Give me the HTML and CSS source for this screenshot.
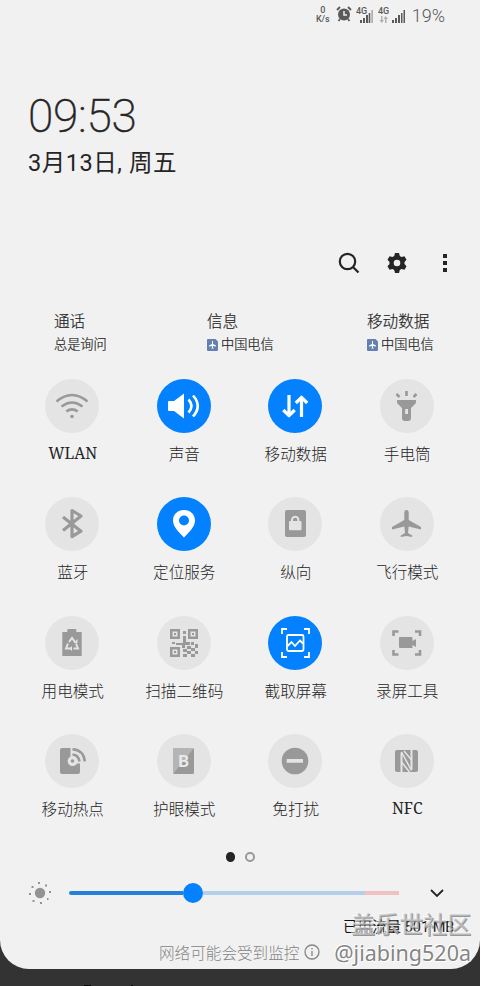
FILE: index.html
```html
<!DOCTYPE html>
<html lang="zh-CN">
<head>
<meta charset="utf-8">
<title>快捷设置</title>
<link rel="stylesheet" href="styles.css">
</head>
<body>
<main class="panel">
  <header class="status">
    <div class="speed"><span>0</span><span>K/s</span></div>
    <svg class="alarm" width="16" height="16" viewBox="0 0 16 16"><circle cx="8" cy="8.500" r="6"/><path class="line" d="M1 4l3-3M15 4l-3-3M4 13l-1.500 2M12 13l1.500 2"/><path class="hand" d="M8 5v4h3"/></svg>
    <svg class="signal" width="17" height="18" viewBox="0 0 17 18"><text x="0" y="8">4G</text><path d="M4 14h2v3H4zM7 12h2v5H7zM10 9h2v8h-2zM12.700 7h1.600v10h-1.600z"/><path class="faint" d="M15.300 4H17v13h-1.700z"/></svg>
    <svg class="signal second" width="28" height="18" viewBox="0 0 28 18"><text x="0" y="8">4G</text><path class="faint" d="M3 10h1.500v4H6L3.700 17 1.500 14H3zM7 17h1.500v-4H10L7.700 10 5.500 13H7z"/><path d="M14 14h2v3h-2zM17 12h2v5h-2zM20 9h2v8h-2zM23 7h1.500v10H23zM25.500 4h1.500v13h-1.500z"/></svg>
    <span class="percent">19%</span>
  </header>
  <section class="clock">
    <div class="time">09:53</div>
    <div class="date">3月13日, 周五</div>
  </section>
  <nav class="tools">
    <svg width="24" height="24" viewBox="0 0 24 24"><circle class="line" cx="10.500" cy="10.500" r="7.700"/><path class="line" d="M16 16l5.500 5.500"/></svg>
    <svg width="24" height="24" viewBox="0 0 24 24"><path fill-rule="evenodd" d="M10 2h4l.8 3 1.700 1 3-.8 2 3.500-2 2.200v2.200l2 2.200-2 3.500-3-.8-1.700 1-.8 3h-4l-.8-3-1.700-1-3 .8-2-3.500 2-2.200v-2.200l-2-2.200 2-3.500 3 .8 1.700-1zM12 8.700a3.300 3.300 0 1 0 0 6.600 3.300 3.300 0 0 0 0-6.600z"/></svg>
    <svg width="24" height="24" viewBox="0 0 24 24"><path d="M10 3h4v4h-4zM10 10h4v4h-4zM10 17h4v4h-4z"/></svg>
  </nav>
  <section class="sims">
    <div class="sim"><b>通话</b><span>总是询问</span></div>
    <div class="sim"><b>信息</b><span><svg class="chip" width="11" height="12" viewBox="0 0 11 12"><path class="card" d="M1 0h7.500L11 2.500V11q0 1-1 1H1q-1 0-1-1V1q0-1 1-1z"/><path class="jet" d="M5 2h1v3l3 1.500v1L6 7v1.500l1 1H4l1-1V7l-3 .5v-1L5 5z"/></svg>中国电信</span></div>
    <div class="sim"><b>移动数据</b><span><svg class="chip" width="11" height="12" viewBox="0 0 11 12"><path class="card" d="M1 0h7.500L11 2.500V11q0 1-1 1H1q-1 0-1-1V1q0-1 1-1z"/><path class="jet" d="M5 2h1v3l3 1.500v1L6 7v1.500l1 1H4l1-1V7l-3 .5v-1L5 5z"/></svg>中国电信</span></div>
  </section>
  <section class="tiles">
    <div class="tile"><svg class="icon" viewBox="0 0 54 54"><path class="line" d="M11.500 22.500Q27 9.500 42.500 22.500M16.500 27.500Q27 19.500 37.500 27.500M21.300 32.300Q27 28.500 32.700 32.300"/><circle cx="27" cy="37.500" r="1.800"/></svg><span>WLAN</span></div>
    <div class="tile on"><svg class="icon" viewBox="0 0 54 54"><path d="M12 22h5l10-7.500v25L17 32h-5q-1 0-1-1v-8q0-1 1-1z"/><path class="line" d="M31.500 20.500q6 6.500 0 13M36 16.500q9.500 10.500 0 21"/></svg><span>声音</span></div>
    <div class="tile on"><svg class="icon" viewBox="0 0 54 54"><path class="line bold" d="M21 16v20M15.300 31l5.700 5.700 5.700-5.700M33.500 38V18M27.800 24l5.700-5.700 5.700 5.700"/></svg><span>移动数据</span></div>
    <div class="tile"><svg class="icon" viewBox="0 0 54 54"><path class="line" d="M26.500 12v5M16.500 15l3 3M36.500 15l-3 3"/><path fill-rule="evenodd" d="M17 21h19v2q0 1.500-1.500 2.500L31 29v10q0 3-3 3h-3q-3 0-3-3V29l-3.500-3.500Q17 24.500 17 23zM25.200 30v5H28v-5z"/></svg><span>手电筒</span></div>
    <div class="tile"><svg class="icon" viewBox="0 0 54 54"><path class="line bold" d="M18 20l18 14.200-9 5.300V13.500l9 5.500L18 33.500"/></svg><span>蓝牙</span></div>
    <div class="tile on"><svg class="icon" viewBox="0 0 54 54"><path fill-rule="evenodd" d="M27 13c-6.500 0-11 4.500-11 10.500C16 30 22 35 27 40.500 32 35 38 30 38 23.500 38 17.500 33.500 13 27 13zM27 18.500a5 5 0 1 1 0 10 5 5 0 0 1 0-10z"/></svg><span>定位服务</span></div>
    <div class="tile"><svg class="icon" viewBox="0 0 54 54"><rect x="17" y="13" width="21" height="27" rx="2"/><rect class="bg" x="21" y="24" width="12.500" height="9.300" rx="1"/><path class="line cut" d="M24 25v-2a3.200 3.200 0 0 1 6.400 0v2"/></svg><span>纵向</span></div>
    <div class="tile"><svg class="icon" viewBox="0 0 54 54"><path d="M24.300 16q0-3 2.200-3t2.200 3v7L41 30v2.500L28.700 29.500l-.7 6.500 4.200 2.500V40l-5.700-1-5.700 1v-1.500L25 36l-.7-6.500L12 32.500V30l12.300-7z"/></svg><span>飞行模式</span></div>
    <div class="tile"><svg class="icon" viewBox="0 0 54 54"><path d="M17.300 16h5v-2q0-1 1-1h7q1 0 1 1v2h5.400v24H17.300z"/><path class="line cut" d="M24 26l3-4 3 4M31 27.500l2 5h-4.500M25.500 32.500H21l2-5"/><path class="bg" d="M27 35l-3-2.500 3-2.500zM28.500 27h4v-4z"/></svg><span>用电模式</span></div>
    <div class="tile"><svg class="icon" viewBox="0 0 54 54"><path fill-rule="evenodd" d="M13 13h10v10H13zM15.500 15.500v5h5v-5zM31 13h10v10H31zM33.500 15.500v5h5v-5zM13 31h10v10H13zM15.500 33.500v5h5v-5z"/><path d="M17 17h2v2h-2zM35 17h2v2h-2zM17 35h2v2h-2zM26 15h3v3h-3zM26 20h3v6h4v3h-5v3h-3v-3h-6v-2h7zM15 26h3v2h-3zM34 26h3v3h-3zM38 28h3v4h-3zM30 30h4v3h-4zM34 32h4v3h-4zM26 33h4v3h-4zM30 35h4v3h-4zM38 35h3v3h-3zM34 38h4v3h-4zM26 38h4v3h-4z"/></svg><span>扫描二维码</span></div>
    <div class="tile on"><svg class="icon" viewBox="0 0 54 54"><path class="line thin" d="M14 18v-5h5M36 13h5v5M41 36v5h-5M19 41h-5v-5"/><rect class="line thin" x="19" y="19" width="16.500" height="16" rx="1.500"/><path class="line thin" d="M19.500 30l4-4 3.500 4 5-5.500 3 3"/></svg><span>截取屏幕</span></div>
    <div class="tile"><svg class="icon" viewBox="0 0 54 54"><path class="line" d="M13.500 20v-4.500h5M35 15.500h5V20M40 34v4.500h-5M18.500 38.500h-5V34"/><path d="M20 21h11.500q1 0 1 1v3l3.500-2v8l-3.500-2v3h-12.500q-1 0-1-1v-9q0-1 1-1z"/></svg><span>录屏工具</span></div>
    <div class="tile"><svg class="icon" viewBox="0 0 54 54"><path d="M17 14h8.500v8.500a5 5 0 1 0 6.500 7H35V38q0 2-2 2H17q-2 0-2-2V16q0-2 2-2z"/><circle cx="27.500" cy="27" r="1.800"/><path class="line" d="M27.500 20.500q6 .5 7 7M27.500 15.300q11 .7 12.300 12"/></svg><span>移动热点</span></div>
    <div class="tile"><svg class="icon" viewBox="0 0 54 54"><rect x="16" y="14" width="21" height="26" rx="1.500"/><path class="light" d="M17.500 14H37L16 40V15.500q0-1.500 1.500-1.500z"/><text x="26.800" y="33">B</text></svg><span>护眼模式</span></div>
    <div class="tile"><svg class="icon" viewBox="0 0 54 54"><circle cx="27" cy="27" r="13.300"/><path class="bg" d="M18.700 25H35v3.700H18.700z"/></svg><span>免打扰</span></div>
    <div class="tile"><svg class="icon" viewBox="0 0 54 54"><rect x="15" y="16" width="23" height="22" rx="2"/><path class="line cut" d="M21.500 38V18.500M31.500 35.500V16"/><path class="line cut slim" d="M21.500 18l10 18.500M24 17l7.500 9M21.500 28l8 10"/></svg><span>NFC</span></div>
  </section>
  <div class="pages"><i class="current"></i><i></i></div>
  <div class="brightness">
    <svg class="sun" width="24" height="24" viewBox="0 0 24 24"><circle cx="12" cy="12" r="5.200"/><path d="M10 1h2v2h-2zM17 3.500h2v2h-2zM21 10h2v2h-2zM19 17h1.500v2H19zM12 21h2v2h-2zM4.500 19h2v2h-2zM1 12h2v2H1zM3.500 5h2v2h-2z"/></svg>
    <div class="track"><i class="fill"></i><i class="knob"></i><i class="rest"></i><i class="warn"></i></div>
    <svg class="chevron" width="16" height="10" viewBox="0 0 16 10"><path d="M2 2l6 6 6-6"/></svg>
  </div>
  <div class="usage">已用流量 501 MB</div>
  <footer class="notice">网络可能会受到监控<svg width="16" height="16" viewBox="0 0 16 16"><circle cx="8" cy="8" r="7"/><path d="M8 7v5M8 4v1.500"/></svg></footer>
</main>
<div class="behind"><i></i><i class="stem"></i></div>
<div class="mark"><span class="community">盖乐世社区</span><span class="user">@jiabing520a</span></div>
</body>
</html>
```
FILE: styles.css
```css
* { box-sizing: border-box; }
body {
  margin: 0;
  height: 986px;
  overflow: hidden;
  position: relative;
  background: #333;
  color: #252525;
  font-family: Roboto, "Noto Sans CJK SC", sans-serif;
}
svg { display: block; flex: none; }
.panel {
  height: 969px;
  background: #f1f1f1;
  border-radius: 0 0 29px 29px;
  display: flex;
  flex-direction: column;
  overflow: hidden;
}
.status {
  height: 30px;
  flex: none;
  padding-right: 35px;
  display: flex;
  justify-content: flex-end;
  align-items: center;
  color: #5a5a5a;
  fill: #5a5a5a;
}
.speed {
  display: flex;
  flex-direction: column;
  align-items: center;
  font-size: 9px;
  line-height: 9px;
  font-weight: 500;
  margin-right: 6px;
}
.alarm { margin-right: 4px; margin-top: -2px; }
.alarm .line { fill: none; stroke: #5a5a5a; stroke-width: 1.800; }
.alarm .hand { fill: none; stroke: #f1f1f1; stroke-width: 1.500; }
.signal { margin-right: 5px; }
.signal text { font: 500 9px Roboto, sans-serif; }
.second { margin-right: 6px; }
.faint { fill: #b0b0b0; }
.percent { font-size: 18px; font-weight: 300; }
.clock { height: 218px; flex: none; padding: 62px 0 0 28px; }
.time { font-size: 46px; line-height: 48px; height: 51px; font-weight: 200; letter-spacing: -.3px; font-family: Roboto, sans-serif; -webkit-text-stroke: .4px #252525; }
.date { font-size: 23.500px; line-height: 40px; letter-spacing: .55px; font-family: Roboto, "Noto Sans CJK SC", sans-serif; }
.tools {
  height: 30px;
  flex: none;
  padding-right: 23px;
  display: flex;
  justify-content: flex-end;
  align-items: center;
  gap: 24px;
  fill: #252525;
}
.tools .line { fill: none; stroke: #252525; stroke-width: 2.200; }
.sims {
  height: 101px;
  flex: none;
  padding: 34px 46px 0 54px;
  display: grid;
  grid-template-columns: 153px 160px auto;
}
.sim { white-space: nowrap; }
.sim b { display: block; height: 23px; font-size: 15.600px; line-height: 20px; font-weight: 300; -webkit-text-stroke: .2px #252525; }
.sim span { display: flex; align-items: center; font-size: 13.200px; line-height: 20px; font-weight: 300; -webkit-text-stroke: .2px #252525; }
.chip { margin-right: 3px; }
.card { fill: #6480ae; }
.jet { fill: #fff; }
.tiles {
  height: 469px;
  flex: none;
  margin: 0 17.500px 0 16.500px;
  display: grid;
  grid-template-columns: repeat(4, 1fr);
  grid-auto-rows: 118.400px;
}
.tile {
  display: flex;
  flex-direction: column;
  align-items: center;
  font-size: 15.600px;
  line-height: 24px;
  font-weight: 300;
  white-space: nowrap;
}
.tile span { margin-top: 8px; padding-left: 1px; font-family: "Noto Sans CJK SC", sans-serif; }
.tile:first-child span, .tile:last-child span { font-family: "Noto Serif", "Liberation Serif", serif; font-weight: 400; }
.icon { width: 54px; height: 54px; border-radius: 50%; background: #e4e4e4; fill: #999; color: #999; }
.on .icon { background: #0381fe; fill: #fff; color: #fff; }
.icon .line { fill: none; stroke: currentColor; stroke-width: 2.600; }
.icon .bold { stroke-width: 3.200; stroke-linejoin: round; }
.icon .thin { stroke-width: 1.800; }
.icon .bg { fill: #e4e4e4; }
.icon .cut { stroke: #e4e4e4; stroke-width: 2; }
.icon .slim { stroke-width: 1.500; }
.icon .light { fill: #b5b5b5; }
.icon text { font: 700 17px Roboto, sans-serif; text-anchor: middle; fill: #e9e9e9; }
.pages { height: 18px; flex: none; display: flex; justify-content: center; align-items: center; gap: 10px; }
.pages i { width: 9.500px; height: 9.500px; border-radius: 50%; border: 2px solid #999; }
.pages .current { background: #252525; border-color: #252525; }
.brightness { height: 54px; flex: none; padding-left: 28px; display: flex; align-items: center; }
.sun { fill: #939393; }
.track { width: 330px; height: 20px; margin-left: 17px; display: flex; align-items: center; }
.track i { display: block; height: 4px; }
.track .fill { width: 114px; background: #2480d8; border-radius: 2px 0 0 2px; }
.track .knob { width: 20px; height: 20px; border-radius: 50%; background: #0381fe; }
.track .rest { width: 162px; background: #b4cfeb; }
.track .warn { width: 34px; background: #efc1c1; }
.chevron { margin-left: 30px; fill: none; stroke: #252525; stroke-width: 1.800; }
.usage { height: 22px; flex: none; margin-top: -4px; padding-left: 343px; font: 400 14.500px/24px Roboto, "Noto Sans CJK SC", sans-serif; color: #111; white-space: nowrap; }
.notice {
  height: 28px;
  flex: none;
  padding-left: 159px;
  display: flex;
  align-items: center;
  gap: 5px;
  font: 300 15.600px/28px "Noto Sans CJK SC", sans-serif;
  color: #858585;
}
.notice svg { fill: none; stroke: #858585; stroke-width: 1.300; }
.behind { height: 17px; padding: 16px 0 0 84px; display: flex; gap: 40px; }
.behind i { width: 7px; height: 1px; background: #080808; }
.behind .stem { width: 2px; }
.mark {
  position: absolute;
  right: 9px;
  top: 907px;
  display: flex;
  flex-direction: column;
  align-items: flex-end;
  white-space: nowrap;
}
.community {
  font: 500 24px/31px "Noto Sans CJK SC", sans-serif;
  color: rgba(205, 205, 205, .6);
  text-shadow: 1px 1px 0 rgba(90, 90, 90, .6), -1px -1px 0 rgba(255, 255, 255, .5);
}
.user {
  font: 400 21.500px/30px "Noto Sans", "Noto Sans CJK SC", sans-serif;
  color: #858585;
  text-shadow: 1px 1px 0 #fff, -1px -1px 0 #fff;
}
```
